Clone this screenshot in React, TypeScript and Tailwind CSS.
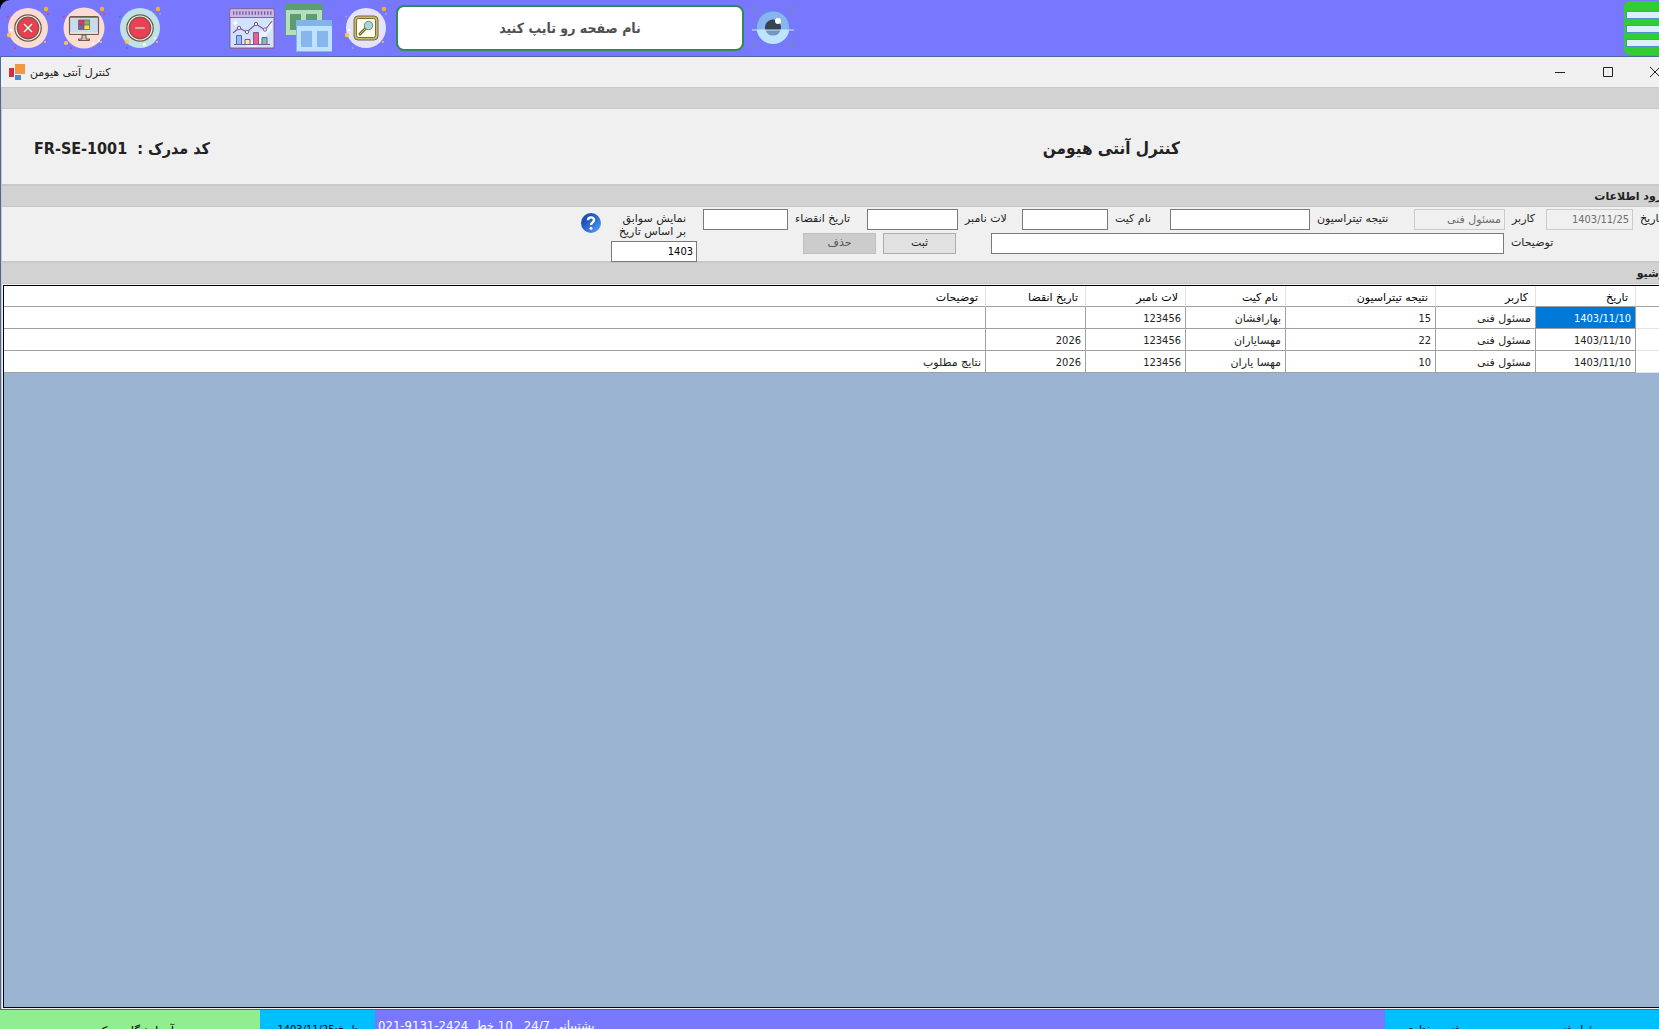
import type { ReactNode } from "react";

type Row = {
  date: string;
  user: string;
  result: string;
  kit: string;
  lot: string;
  expiry: string;
  notes: string;
};

const rows: Row[] = [
  { date: "1403/11/10", user: "مسئول فنی", result: "15", kit: "بهارافشان", lot: "123456", expiry: "", notes: "" },
  { date: "1403/11/10", user: "مسئول فنی", result: "22", kit: "مهسایاران", lot: "123456", expiry: "2026", notes: "" },
  { date: "1403/11/10", user: "مسئول فنی", result: "10", kit: "مهسا یاران", lot: "123456", expiry: "2026", notes: "نتایج مطلوب" },
];

const columns: { key: keyof Row; title: string; width: string; numeric?: boolean }[] = [
  { key: "date", title: "تاریخ", width: "w-[100px]", numeric: true },
  { key: "user", title: "کاربر", width: "w-[100px]" },
  { key: "result", title: "نتیجه تیتراسیون", width: "w-[150px]", numeric: true },
  { key: "kit", title: "نام کیت", width: "w-[100px]" },
  { key: "lot", title: "لات نامبر", width: "w-[100px]", numeric: true },
  { key: "expiry", title: "تاریخ انقضا", width: "w-[100px]", numeric: true },
  { key: "notes", title: "توضیحات", width: "" },
];

const condensed = "font-['DejaVu_Sans_Condensed','DejaVu_Sans',sans-serif]";

const Sparks = ({ teal = false }: { teal?: boolean }) => (
  <>
    <circle cx="40" cy="3" r="2.2" fill="#f5b516" />
    <circle cx="2" cy="10.5" r="1" fill={teal ? "#1593a5" : "#ee3e54"} />
    <circle cx="42" cy="8" r="1" fill={teal ? "#9ba6e8" : "#ee3e54"} />
    <circle cx="9" cy="42" r="1.1" fill={teal ? "#1593a5" : "#ee3e54"} />
    <circle cx="39" cy="36" r="1.1" fill="#fbc23c" />
  </>
);

const CloseIcon = () => (
  <svg width="44" height="44" viewBox="0 0 44 44">
    <circle cx="22" cy="22" r="20" fill="#fadcd3" />
    <Sparks />
    <circle cx="3" cy="29" r="2.2" fill="#fcc646" />
    <circle cx="5" cy="24" r="1.2" fill="#fff" />
    <circle cx="22" cy="22" r="13.2" fill="#fff8ea" stroke="#70594f" strokeWidth="1.3" />
    <circle cx="22" cy="22" r="10.8" fill="#ee3e54" stroke="#70594f" strokeWidth="1.2" />
    <path d="M18 18l8 8M26 18l-8 8" stroke="#70594f" strokeWidth="2.8" />
    <path d="M18 18l8 8M26 18l-8 8" stroke="#fff3dd" strokeWidth="1.6" />
  </svg>
);

const MonitorIcon = () => (
  <svg width="44" height="44" viewBox="0 0 44 44">
    <circle cx="22" cy="22" r="20.5" fill="#fadcd3" />
    <Sparks />
    <circle cx="4" cy="37" r="2.1" fill="#fcc646" />
    <circle cx="31" cy="37.5" r="1.3" fill="#fff" />
    <circle cx="37" cy="35" r="1" fill="#fff" />
    <rect x="7.5" y="10.5" width="29" height="18" rx="1.5" fill="#c5dcec" stroke="#70594f" strokeWidth="1.2" />
    <path d="M8 11.500h28" stroke="#8e7b73" />
    <path d="M8 26.800h28" stroke="#e8e1d8" strokeWidth="1.6" />
    <path d="M7.500 28.500h29" stroke="#70594f" />
    <path d="M20 29h4v4h3.500v1.500h-11V33H20z" fill="#cfc5ad" stroke="#70594f" />
    <rect x="16.5" y="14" width="5.5" height="5" fill="#d9347a" />
    <rect x="22" y="14" width="5.5" height="5" fill="#78b95b" />
    <rect x="16.5" y="19" width="5.5" height="4.5" fill="#7263b8" />
    <rect x="22" y="19" width="5.5" height="4.5" fill="#f6e33f" />
    <path d="M22 14v9.500M16.500 19h11M16.500 14h11v9.500h-11z" fill="none" stroke="#70594f" strokeWidth=".7" />
  </svg>
);

const MinusIcon = () => (
  <svg width="44" height="44" viewBox="0 0 44 44">
    <circle cx="22" cy="22" r="20" fill="#bfe3e4" />
    <Sparks teal />
    <circle cx="9" cy="36" r="2.1" fill="#fcc646" />
    <circle cx="26.5" cy="38.5" r="1.5" fill="#fff" />
    <circle cx="37" cy="32" r="1" fill="#fff" />
    <circle cx="22" cy="22" r="13.2" fill="#fff8ea" stroke="#70594f" strokeWidth="1.3" />
    <circle cx="22" cy="22" r="10.8" fill="#ee3e54" stroke="#70594f" strokeWidth="1.2" />
    <rect x="17" y="21" width="10" height="2" fill="#d9c9b2" stroke="#9b7468" strokeWidth=".6" />
  </svg>
);

const ChartIcon = () => (
  <svg width="46" height="41" viewBox="0 0 46 41">
    <rect x=".8" y=".8" width="44.4" height="39.4" rx="1.5" fill="#cfe4fb" stroke="#8a63a5" strokeWidth="1.4" />
    <path d="M1.500 1.500h43V9h-43z" fill="#c7b9e6" />
    <path d="M1 9.500h44" stroke="#8a63a5" />
    <path d="M4 5h39" stroke="#7c5799" strokeWidth="3.5" strokeDasharray="1.3 1.8" />
    <path d="M17 39L43 11v10L27 39z" fill="#e8f4ff" />
    <path d="M4 25l6-5 8 4 9-8 9 6 7-9" fill="none" stroke="#7f569c" strokeWidth="1.2" />
    <g fill="#f2eafc" stroke="#7f569c">
      <circle cx="10" cy="20" r="1.7" />
      <circle cx="18" cy="24" r="1.7" />
      <circle cx="27" cy="16" r="1.7" />
      <circle cx="36" cy="21.5" r="1.7" />
    </g>
    <g stroke="#7f569c">
      <path d="M7.500 27.500h5v9h-5z" fill="#7ac6fa" />
      <path d="M16 31.500h5v5h-5z" fill="#fee59a" />
      <path d="M24.500 24.500h5v12h-5z" fill="#ed5e8b" />
      <path d="M33 29.500h5v7h-5z" fill="#72c6a6" />
      <path d="M5 36.500h36" />
    </g>
    <path d="M6.500 12l1 2 2 1-2 1-1 2-1-2-2-1 2-1z" fill="#fff" />
  </svg>
);

const WindowsIcon = () => (
  <svg width="47" height="48" viewBox="0 0 47 48">
    <path d="M0 0h38v32H0z" fill="#5d9c76" />
    <path d="M1 6h36v25H1z" fill="#b5dfbb" />
    <path d="M5 10h11v16H5zM21 10h11v16H21z" fill="#5d9c76" />
    <path d="M11 16h36v32H11z" fill="#83b4e8" />
    <path d="M12 22h35v25H12z" fill="#bde3ff" />
    <path d="M16 27h11v16H16zM32 27h11v16H32z" fill="#88b5ee" />
  </svg>
);

const SearchIcon = () => (
  <svg width="44" height="44" viewBox="0 0 44 44">
    <circle cx="22" cy="22" r="20" fill="#e4e3f7" />
    <circle cx="40" cy="3" r="2.2" fill="#f5b516" />
    <circle cx="42" cy="8" r="1" fill="#a7a6c9" />
    <circle cx="2" cy="10.5" r="1" fill="#a7a6c9" />
    <circle cx="3" cy="29" r="2.2" fill="#fcc646" />
    <circle cx="5" cy="24" r="1.2" fill="#fff" />
    <circle cx="9" cy="42" r="1" fill="#a7a6c9" />
    <circle cx="39" cy="36" r="1.1" fill="#fbc23c" />
    <rect x="10" y="10" width="24" height="24" rx="4" fill="#c8bc63" stroke="#796a43" />
    <rect x="12.5" y="12.5" width="19" height="19" rx="2" fill="#fffceb" stroke="#796a43" />
    <path d="M21.500 22.500l-5.500 5.500" stroke="#6d6e40" strokeWidth="3" strokeLinecap="round" />
    <path d="M21 23l-5 5" stroke="#b6ba64" strokeWidth="1" />
    <circle cx="24.5" cy="19.5" r="4.2" fill="#9ddcda" stroke="#857e73" />
  </svg>
);

const EyeIcon = () => (
  <svg width="42" height="42" viewBox="0 0 42 42">
    <path d="M1 8V1h6M35 1h6v6M1 34v6h6M35 40h6v-6" fill="none" stroke="#7186c5" strokeWidth="1.5" />
    <circle cx="21" cy="20.5" r="16.5" fill="#88b5f0" stroke="#5b87d3" strokeWidth=".8" />
    <path d="M4.700 23a16.500 16.500 0 0 0 32.600 0z" fill="#bfe4ff" />
    <path d="M13.400 23a8 8 0 1 1 15.200 0z" fill="#37434f" />
    <path d="M13.400 23a8 8 0 0 0 15.200 0z" fill="#7395c2" />
    <circle cx="26" cy="14" r="3" fill="#fff" />
    <path d="M0 23h42" stroke="#c6e7ff" strokeWidth="1.2" />
  </svg>
);

const ToolButton = ({ label, children }: { label: string; children: ReactNode }) => (
  <button type="button" aria-label={label} className="shrink-0">
    {children}
  </button>
);

const Band = ({ children }: { children?: ReactNode }) => (
  <h2 className="h-[23px] shrink-0 border-t-2 border-b border-[#c8c8c8] bg-[#d2d2d2] px-2 pt-px text-[11px] leading-5 font-bold text-[#222]">
    {children}
  </h2>
);

const Field = ({
  id,
  label,
  labelClass,
  inputClass,
  value,
  disabled,
}: {
  id: string;
  label: string;
  labelClass: string;
  inputClass: string;
  value?: string;
  disabled?: boolean;
}) => (
  <div className="flex shrink-0 items-center gap-[7px]">
    <label htmlFor={id} className={`shrink-0 text-left whitespace-nowrap ${labelClass}`}>
      {label}
    </label>
    <input
      id={id}
      type="text"
      defaultValue={value}
      disabled={disabled}
      className={`h-[21px] border border-[#7a7a7a] bg-white px-[3px] text-black disabled:border-[#ccc] disabled:bg-[#f0f0f0] disabled:text-[#6d6d6d] ${inputClass}`}
    />
  </div>
);

const TopBar = () => (
  <div className="bg-black">
    <div className="flex h-14 items-center rounded-tl-[10px] bg-[#7878ff]">
      <div className="flex items-center gap-3 pl-[6px]">
        <ToolButton label="بستن"><CloseIcon /></ToolButton>
        <ToolButton label="دسکتاپ"><MonitorIcon /></ToolButton>
        <ToolButton label="کوچک کردن"><MinusIcon /></ToolButton>
      </div>
      <div className="flex items-center gap-[10px] pl-[67px]">
        <ToolButton label="نمودار"><ChartIcon /></ToolButton>
        <ToolButton label="پنجره ها"><WindowsIcon /></ToolButton>
      </div>
      <div className="flex items-center gap-2 pl-3">
        <ToolButton label="جستجو"><SearchIcon /></ToolButton>
        <input
          type="text"
          dir="rtl"
          aria-label="نام صفحه رو تایپ کنید"
          placeholder="نام صفحه رو تایپ کنید"
          className={`h-[46px] w-[348px] rounded-lg border-2 border-[#2e8b57] bg-white text-center text-[14px] font-bold placeholder:text-[#505050] ${condensed}`}
        />
        <ToolButton label="نمایش"><EyeIcon /></ToolButton>
      </div>
      <button type="button" aria-label="منو" className="ml-auto flex h-[54px] w-[54px] flex-col justify-center gap-[6px] rounded-md bg-[#32cd32] px-[2px] pt-[2px]">
        <span className="h-2 w-full border border-[#4b93c9] bg-[#def0ff]" />
        <span className="h-2 w-full border border-[#4b93c9] bg-[#def0ff]" />
        <span className="h-2 w-full border border-[#4b93c9] bg-[#def0ff]" />
      </button>
    </div>
  </div>
);

const TitleBar = () => (
  <div className="flex h-[30px] shrink-0 items-center bg-[#f0f0f0]">
    <svg width="17" height="17" viewBox="0 0 17 17" className="ml-2">
      <path d="M0 4h5v9H0z" fill="#cf3046" />
      <path d="M6 0h10v10H6z" fill="#f29742" />
      <path d="M6 11h6v5H6z" fill="#4c8bcb" />
    </svg>
    <h1 dir="rtl" className="ml-1 pt-[2px] text-[11px] text-[#222]">کنترل آنتی هیومن</h1>
    <div className="ml-auto flex text-[#222]">
      <button type="button" aria-label="Minimize" className="grid h-[30px] w-12 place-items-center">
        <svg width="10" height="10" stroke="currentColor"><path d="M0 5.500h10" /></svg>
      </button>
      <button type="button" aria-label="Maximize" className="grid h-[30px] w-12 place-items-center">
        <svg width="10" height="10" fill="none" stroke="currentColor"><path d="M.5.5h9v9h-9z" /></svg>
      </button>
      <button type="button" aria-label="Close" className="grid h-[30px] w-[45px] place-items-center">
        <svg width="10" height="10" stroke="currentColor"><path d="M0 0l10 10M10 0L0 10" /></svg>
      </button>
    </div>
  </div>
);

const EntryForm = () => (
  <form className="flex h-[54px] shrink-0 text-[11px] text-[#222]">
    <div className="flex flex-col gap-[3px] pt-[2px]">
      <div className="flex">
        <Field id="date" label="تاریخ" labelClass="w-[37px]" inputClass={`w-[87px] ${condensed}`} value="1403/11/25" disabled />
        <Field id="user" label="کاربر" labelClass="w-[34px]" inputClass="w-[91px]" value="مسئول فنی" disabled />
        <Field id="result" label="نتیجه تیتراسیون" labelClass="w-[97px]" inputClass="w-[140px]" />
        <Field id="kit" label="نام کیت" labelClass="w-[55px]" inputClass="w-[86px]" />
        <Field id="lot" label="لات نامبر" labelClass="w-[57px]" inputClass="w-[91px]" />
        <Field id="expiry" label="تاریخ انقضاء" labelClass="w-[72px]" inputClass="w-[85px]" />
      </div>
      <div className="flex">
        <Field id="notes" label="توضیحات" labelClass="w-[166px]" inputClass="w-[513px]" />
        <button type="button" className="mr-[35px] h-[21px] w-[73px] border border-[#adadad] bg-[#e1e1e1]">ثبت</button>
        <button type="button" disabled className="mr-[7px] h-[21px] w-[73px] border border-[#bfbfbf] bg-[#ccc] text-[#555]">حذف</button>
      </div>
    </div>
    <div className="mr-[6px] flex w-[86px] flex-col gap-[3px] pt-[5px]">
      <label htmlFor="history" className="pr-[11px] leading-[13px] whitespace-nowrap">
        نمایش سوابق
        <br />
        بر اساس تاریخ
      </label>
      <input
        id="history"
        type="text"
        defaultValue="1403"
        className={`relative h-[21px] w-full shrink-0 border border-[#7a7a7a] bg-white px-[3px] text-black ${condensed}`}
      />
    </div>
    <button type="button" aria-label="راهنما" className="mt-[6px] mr-[10px] h-5">
      <svg width="20" height="20" viewBox="0 0 20 20">
        <defs>
          <linearGradient id="help" x1="0" y1="0" x2="1" y2="1">
            <stop offset=".3" stopColor="#1e50bd" />
            <stop offset="1" stopColor="#58a8f7" />
          </linearGradient>
        </defs>
        <circle cx="10" cy="10" r="10" fill="url(#help)" />
        <path d="M7 7.200C7 3.500 13 3.500 13 7c0 2.400-3 2.400-3 5" fill="none" stroke="#fff" strokeWidth="2.4" />
        <circle cx="10" cy="15.3" r="1.5" fill="#fff" />
      </svg>
    </button>
  </form>
);

const Archive = () => (
  <div className="m-px min-h-0 flex-1 border border-black bg-[#99b3d1]">
    <table className="w-full table-fixed border-separate border-spacing-0 bg-white text-[11px] text-[#222]">
      <thead>
        <tr className="h-[21px]">
          <th aria-label="ردیف" className="w-[39px] border-b border-[#a0a0a0]" />
          {columns.map((c) => (
            <th
              key={c.key}
              className={`border-r border-b border-r-[#e3e3e3] border-b-[#a0a0a0] px-[7px] pt-[3px] text-right leading-4 font-normal text-black ${c.width}`}
            >
              {c.title}
            </th>
          ))}
        </tr>
      </thead>
      <tbody>
        {rows.map((row, i) => (
          <tr key={i} className="h-[22px]">
            <td className="border-b border-[#e3e3e3]" />
            {columns.map((c) => (
              <td
                key={c.key}
                className={`border-r border-b border-[#a0a0a0] px-1 pt-[3px] text-right leading-4 ${
                  i === 0 && c.key === "date" ? "bg-[#0078d7] text-white" : ""
                } ${c.numeric ? condensed : ""}`}
              >
                {row[c.key]}
              </td>
            ))}
          </tr>
        ))}
      </tbody>
    </table>
  </div>
);

const StatusBar = () => (
  <div dir="ltr" className="flex h-[19px] shrink-0 overflow-hidden bg-[#7878ff] text-[11px] whitespace-nowrap text-black">
    <div dir="rtl" className="w-[260px] shrink-0 bg-[#90ee90] pt-3 text-center text-[12px]">آزمایشگاه مرکزی</div>
    <div dir="rtl" className={`w-[115px] shrink-0 bg-[#00bfff] pt-3 text-center ${condensed}`}>تاریخ:1403/11/25</div>
    <div dir="rtl" className={`flex-1 pt-[6px] pl-[3px] text-left text-[13px] whitespace-pre text-white ${condensed}`}>
      {"پشتیبانی 24/7   10 خط  "}
      <bdi>021-9131-2424</bdi>
    </div>
    <div dir="rtl" className="flex w-[293px] shrink-0 justify-between bg-[#00bfff] pt-3 pr-[70px] pl-5">
      <span>مسئول فنی</span>
      <span>فنی مختاری</span>
    </div>
  </div>
);

export default function App() {
  return (
    <div className="h-screen overflow-hidden font-['DejaVu_Sans',sans-serif]">
      <div className="flex h-full w-[calc(100%+19px)] flex-col">
        <TopBar />
        <main className="flex min-h-0 flex-1 flex-col border border-[#4a6a9f] bg-[#f0f0f0]">
          <TitleBar />
          <div dir="rtl" className="flex min-h-0 flex-1 flex-col border-l border-[#c8c8c8]">
            <div className="h-[22px] shrink-0 border-y border-[#c8c8c8] bg-[#d2d2d2]" />
            <header className={`flex h-[75px] shrink-0 items-center justify-between pt-1 pr-[497px] pl-8 font-bold text-[#222] ${condensed}`}>
              <p className="text-[17px]">کنترل آنتی هیومن</p>
              <p className="text-[16px] whitespace-pre">
                {"کد مدرک :  "}
                <bdi>FR-SE-1001</bdi>
              </p>
            </header>
            <Band>ورود اطلاعات</Band>
            <EntryForm />
            <Band>آرشیو</Band>
            <Archive />
          </div>
        </main>
        <StatusBar />
      </div>
    </div>
  );
}
